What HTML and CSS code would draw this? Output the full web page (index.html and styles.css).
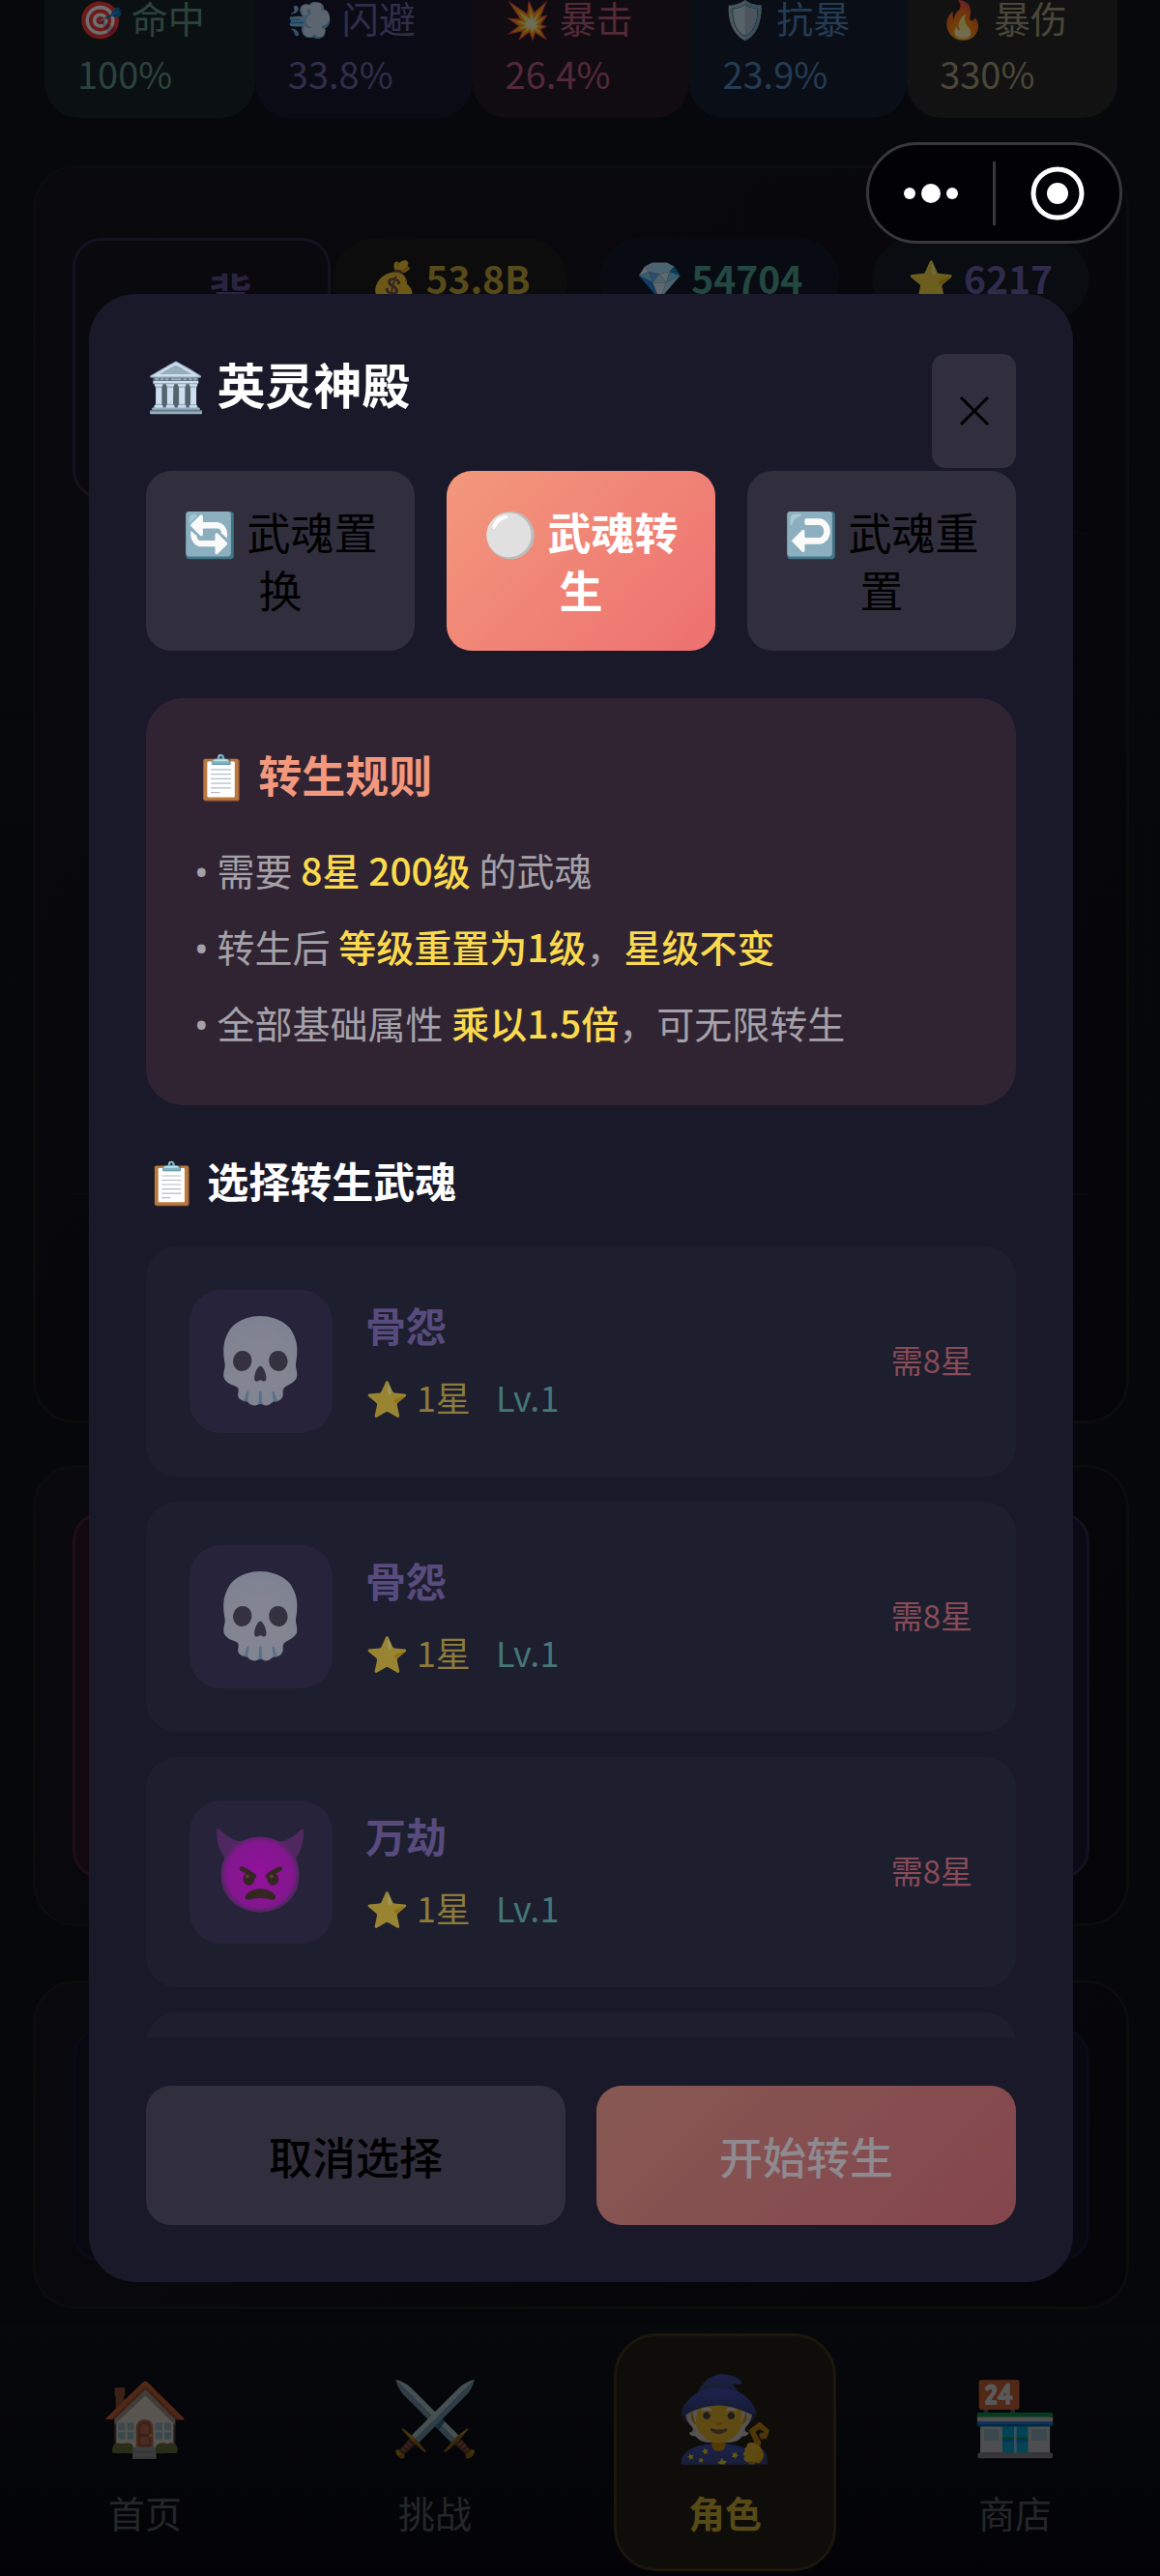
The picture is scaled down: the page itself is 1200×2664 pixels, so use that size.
FILE: index.html
```html
<!DOCTYPE html>
<html lang="zh-CN">
<head>
<meta charset="utf-8">
<meta name="viewport" content="width=device-width, initial-scale=1">
<title>英灵神殿</title>
<link rel="stylesheet" href="styles.css">
</head>
<body>
<div class="app">
  <main class="page">
    <section class="stats">
      <div class="stat stat-hit"><div class="stat-name"><span class="emoji">🎯</span> 命中</div><div>100%</div></div>
      <div class="stat stat-dodge"><div class="stat-name"><span class="emoji">💨</span> 闪避</div><div>33.8%</div></div>
      <div class="stat stat-crit"><div class="stat-name"><span class="emoji">💥</span> 暴击</div><div>26.4%</div></div>
      <div class="stat stat-resist"><div class="stat-name"><span class="emoji">🛡️</span> 抗暴</div><div>23.9%</div></div>
      <div class="stat stat-damage"><div class="stat-name"><span class="emoji">🔥</span> 暴伤</div><div>330%</div></div>
    </section>
    <section class="panel panel-bag">
      <div class="purse">
        <div class="bag">背</div>
        <div class="coins">
          <div class="coin coin-gold"><span class="emoji">💰</span> 53.8B</div>
          <div class="coin coin-gem"><span class="emoji">💎</span> 54704</div>
          <div class="coin coin-star"><span class="emoji">⭐</span> 6217</div>
        </div>
      </div>
      <div class="slots"></div>
    </section>
    <section class="panel panel-duo"><div class="tile tile-red"></div><div class="tile tile-violet"></div></section>
    <section class="panel panel-last"><div class="tile tile-blue"></div></section>
  </main>
  <nav class="nav">
    <a class="nav-item" href="#home"><span class="nav-icon emoji">🏠</span><span>首页</span></a>
    <a class="nav-item" href="#battle"><span class="nav-icon emoji">⚔️</span><span>挑战</span></a>
    <a class="nav-item active" href="#role"><span class="nav-icon emoji">🧙</span><span>角色</span></a>
    <a class="nav-item" href="#shop"><span class="nav-icon emoji">🏪</span><span>商店</span></a>
  </nav>
</div>

<div class="overlay">
  <section class="modal" role="dialog" aria-labelledby="modal-title">
    <header class="modal-head">
      <h1 class="modal-title" id="modal-title"><span class="emoji">🏛️</span> 英灵神殿</h1>
      <button class="close" aria-label="关闭"><svg viewBox="0 0 32 32" width="32" height="32"><path d="M2 2 30 30M30 2 2 30" stroke="#000" stroke-width="3" fill="none"/></svg></button>
    </header>
    <div class="tabs">
      <button class="tab"><span class="emoji">🔄</span> 武魂置换</button>
      <button class="tab tab-on"><span class="emoji">⚪</span> 武魂转生</button>
      <button class="tab"><span class="emoji">↩️</span> 武魂重置</button>
    </div>
    <section class="rules">
      <h2 class="rules-title"><span class="emoji">📋</span> 转生规则</h2>
      <p><span class="bullet">•</span> 需要 <b>8星 200级</b> 的武魂</p>
      <p><span class="bullet">•</span> 转生后 <b>等级重置为1级</b>，<b>星级不变</b></p>
      <p><span class="bullet">•</span> 全部基础属性 <b>乘以1.5倍</b>，可无限转生</p>
    </section>
    <h2 class="pick-title"><span class="emoji">📋</span> 选择转生武魂</h2>
    <ul class="list">
      <li class="soul">
        <span class="avatar emoji">💀</span>
        <div class="soul-info"><div class="soul-name">骨怨</div><div class="soul-meta"><span class="stars"><span class="emoji">⭐</span> 1星</span><span class="level">Lv.1</span></div></div>
        <span class="need">需8星</span>
      </li>
      <li class="soul">
        <span class="avatar emoji">💀</span>
        <div class="soul-info"><div class="soul-name">骨怨</div><div class="soul-meta"><span class="stars"><span class="emoji">⭐</span> 1星</span><span class="level">Lv.1</span></div></div>
        <span class="need">需8星</span>
      </li>
      <li class="soul">
        <span class="avatar emoji">👿</span>
        <div class="soul-info"><div class="soul-name">万劫</div><div class="soul-meta"><span class="stars"><span class="emoji">⭐</span> 1星</span><span class="level">Lv.1</span></div></div>
        <span class="need">需8星</span>
      </li>
      <li class="soul"></li>
    </ul>
    <footer class="actions">
      <button class="action">取消选择</button>
      <button class="action action-go" disabled>开始转生</button>
    </footer>
  </section>
</div>

<div class="capsule">
  <button class="capsule-btn" aria-label="更多"><svg viewBox="0 0 60 24" width="60" height="24" fill="#fff"><circle cx="8" cy="12" r="6"/><circle cx="30" cy="12" r="10"/><circle cx="52" cy="12" r="6"/></svg></button>
  <button class="capsule-btn" aria-label="退出"><svg viewBox="0 0 56 56" width="56" height="56"><circle cx="28" cy="28" r="25" fill="none" stroke="#fff" stroke-width="5"/><circle cx="28" cy="28" r="11" fill="#fff"/></svg></button>
</div>
</body>
</html>
```
FILE: styles.css
```css
* { box-sizing: border-box; }

body {
  margin: 0;
  background: #050709;
  color: #fff;
  font-family: "Noto Sans CJK SC", sans-serif;
}

h1, h2, p, ul { margin: 0; padding: 0; }
button { border: 0; padding: 0; font: inherit; color: #000; }
ul { list-style: none; }
.emoji { font-family: "Noto Color Emoji", "Noto Sans CJK SC", sans-serif; line-height: 1; }

/* dimmed game page */
.app {
  min-height: 100vh;
  display: flex;
  flex-direction: column;
  background: linear-gradient(#06080b, #05070a);
}
.page { flex: 1; padding: 0 32px 0 34px; }
.page .emoji { opacity: 0.4; }
.nav .emoji { opacity: 0.33; }

.stats { display: grid; grid-template-columns: 218fr 225fr 225fr 225fr 218fr; margin: 0 12px; }
.stat {
  height: 122px;
  padding: 0 0 0 34px;
  border-radius: 0 0 36px 36px;
  font-size: 38px;
  line-height: 60px;
}
.stat-name { line-height: 36px; margin-bottom: 6px; white-space: nowrap; }
.stat-hit { background: #0b1013; color: #2c433d; }
.stat-dodge { background: #0b0b15; color: #322d4a; }
.stat-crit { background: #110c12; color: #532a38; }
.stat-resist { background: #0a0e16; color: #243c53; }
.stat-damage { background: #121213; color: #4b4738; }

.panel {
  border: 3px solid #0c0c0d;
  border-radius: 44px;
  background: linear-gradient(135deg, #0a090d, #050509);
  padding: 46px 38px;
}
.panel-bag { margin-top: 49px; height: 1301px; padding-top: 72px; }
.purse { display: flex; align-items: flex-start; gap: 3px; }
.bag {
  width: 267px;
  height: 270px;
  border: 3px solid #14121e;
  border-radius: 30px;
  background: #0a090e;
  color: #2a2340;
  font-weight: 700;
  font-size: 45px;
  line-height: 60px;
  padding: 24px 0 0 138px;
}
.coins { flex: 1; display: flex; justify-content: space-between; }
.coin {
  height: 86px;
  padding: 0 38px;
  border-radius: 43px;
  font-size: 39px;
  font-weight: 700;
  line-height: 82px;
  white-space: nowrap;
}
.coin-gold { background: #0d0c0c; color: #574a1a; }
.coin-gem { background: #080c12; color: #234840; }
.coin-star { background: #090c10; color: #302b4c; }
.slots { height: 686px; margin-top: 34px; border: solid #0a0a0c; border-width: 2px 0; }
.panel-duo { margin-top: 43px; height: 477px; display: flex; gap: 32px; }
.panel-last { margin-top: 56px; height: 340px; display: flex; }
.tile { flex: 1; border: 3px solid; border-radius: 30px; }
.tile-red { background: #11090e; border-color: #1e0f17; }
.tile-violet { background: #0b0914; border-color: #14121f; }
.tile-blue { background: #070810; border-color: #0b0b17; }

.nav {
  height: 260px;
  padding-top: 9px;
  display: grid;
  grid-template-columns: repeat(4, 1fr);
  justify-items: center;
  align-items: start;
  background: linear-gradient(#07080b, #030307);
}
.nav-item {
  width: 230px;
  height: 246px;
  padding-top: 34px;
  border: 3px solid transparent;
  border-radius: 44px;
  display: flex;
  flex-direction: column;
  align-items: center;
  color: #25262a;
  font-size: 38px;
  line-height: 60px;
  text-decoration: none;
}
.nav-icon.emoji { font-size: 74px; line-height: 104px; margin-bottom: 14px; }
.nav-item.active {
  background: #0f0d0a;
  border-color: #1b170c;
  color: #574a16;
  font-weight: 700;
}
.active .nav-icon.emoji { font-size: 85px; }

/* dialog */
.overlay {
  position: absolute;
  inset: 0;
  padding: 0 90px 0 92px;
  display: flex;
  align-items: center;
}
.modal {
  width: 100%;
  padding: 59px;
  border-radius: 48px;
  background: #19192a;
}
.modal-head {
  display: flex;
  justify-content: space-between;
  align-items: flex-start;
  padding-top: 3px;
}
.modal-title { font-size: 50px; line-height: 60px; font-weight: 700; }
.close {
  width: 87px;
  height: 118px;
  border-radius: 14px;
  background: #312f3d;
  display: flex;
  align-items: center;
  justify-content: center;
}
.tabs { display: grid; grid-template-columns: repeat(3, 1fr); gap: 33px; margin-top: 3px; }
.tab {
  height: 186px;
  padding: 0 33px;
  border-radius: 26px;
  background: #312f3d;
  font-size: 45px;
  line-height: 60px;
}
.tab-on {
  background: linear-gradient(135deg, #f3987c, #ed7070);
  color: #fff;
  font-weight: 700;
}
.rules {
  margin-top: 49px;
  padding: 48px 50px 46px;
  border-radius: 38px;
  background: #302433;
  color: #a5a1a8;
  font-size: 39px;
  line-height: 79px;
}
.rules-title { margin-bottom: 28px; color: #f3987c; font-size: 45px; line-height: 62px; }
.rules b { color: #fbdb4d; font-weight: 500; }
.bullet { font-family: "Noto Sans", sans-serif; line-height: 1; }
.pick-title { margin-top: 46px; font-size: 43px; line-height: 62px; }
.list {
  max-height: 818px;
  margin-top: 38px;
  overflow-y: auto;
  scrollbar-width: none;
  display: flex;
  flex-direction: column;
  gap: 26px;
}
.soul {
  flex: none;
  height: 238px;
  padding: 45px;
  border-radius: 32px;
  background: #1d1e2e;
  display: flex;
  align-items: center;
  gap: 34px;
}
.avatar.emoji {
  width: 148px;
  height: 148px;
  border-radius: 32px;
  background: #26233a;
  font-size: 84px;
  line-height: 148px;
  text-align: center;
  color: rgba(255, 255, 255, 0.5);
}
.soul-info { flex: 1; padding-bottom: 6px; }
.soul-name { color: #584b7e; font-size: 42px; line-height: 62px; font-weight: 700; }
.soul-meta { display: flex; gap: 26px; margin-top: 16px; font-size: 36px; line-height: 54px; }
.stars { color: #8c7b3b; }
.stars .emoji { opacity: 0.55; }
.level { color: #467678; }
.need { padding-bottom: 4px; color: #894b57; font-size: 33px; }
.actions { display: grid; grid-template-columns: 1fr 1fr; gap: 32px; margin-top: 50px; }
.action {
  height: 144px;
  border-radius: 26px;
  background: #312f3d;
  font-size: 45px;
  font-weight: 500;
}
.action-go {
  background: linear-gradient(135deg, #875953, #84454d);
  color: #8f8990;
}

/* host app controls */
.capsule {
  position: absolute;
  top: 147px;
  right: 39px;
  width: 265px;
  height: 105px;
  border: 3px solid #38383b;
  border-radius: 53px;
  background: #020204;
  display: flex;
  align-items: center;
}
.capsule-btn {
  flex: 1;
  height: 66px;
  background: none;
  display: flex;
  align-items: center;
  justify-content: center;
}
.capsule-btn + .capsule-btn { border-left: 3px solid #38383b; }
```
